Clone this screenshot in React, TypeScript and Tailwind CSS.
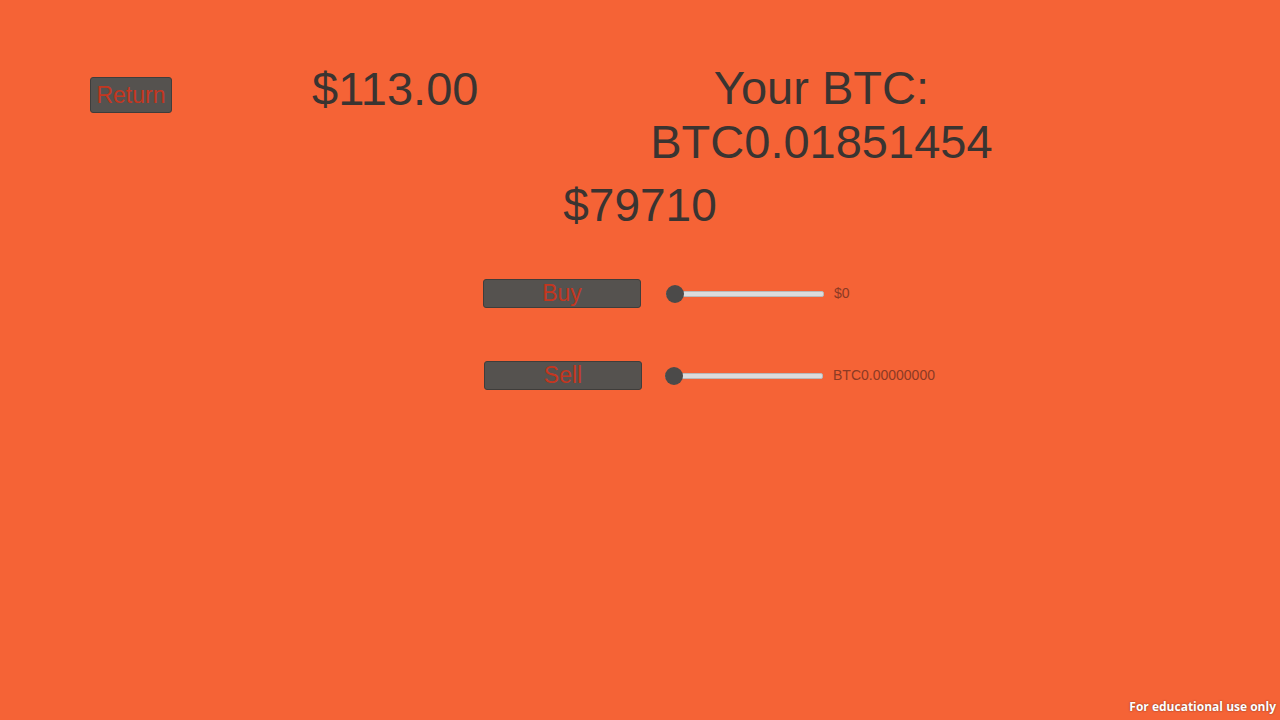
export default function App() {
  return (
    <div className="relative min-h-screen w-full bg-[#f56336] font-['Liberation_Sans',Arial,sans-serif] text-[#3a3431]">
      {/* Top row */}
      <div className="flex items-start">
        <button className="ml-[90px] mt-[77px] h-[36px] w-[82px] rounded-[3px] border border-[#3f3d3b] bg-[#55524f] text-[23px] leading-none text-[#c4361f]">
          Return
        </button>
        <div className="ml-[140px] mt-[62px] text-[47px] leading-[54px]">$113.00</div>
        <div className="ml-[143px] mt-[61px] w-[400px] text-center text-[47px] leading-[54px]">
          Your BTC:
          <br />
          BTC0.01851454
        </div>
      </div>

      <div className="mt-[9px] text-center text-[46px] leading-[54px]">$79710</div>

      {/* Buy */}
      <div className="ml-[483px] mt-[47px] flex items-center">
        <button className="h-[29px] w-[158px] rounded-[3px] border border-[#3f3d3b] bg-[#55524f] text-[23px] leading-none text-[#c4361f]">
          Buy
        </button>
        <Slider />
        <span className="ml-[10px] text-[14px] text-[#8c3a24]">$0</span>
      </div>

      {/* Sell */}
      <div className="ml-[484px] mt-[53px] flex items-center">
        <button className="h-[29px] w-[158px] rounded-[3px] border border-[#3f3d3b] bg-[#55524f] text-[23px] leading-none text-[#c4361f]">
          Sell
        </button>
        <Slider shift />
        <span className="ml-[10px] text-[14px] text-[#8c3a24]">BTC0.00000000</span>
      </div>

      <div className="absolute bottom-[4px] right-[4px] font-['Open_Sans',sans-serif] text-[12px] font-bold text-white [text-shadow:0_0_2px_rgba(0,0,0,0.5)]">
        For educational use only
      </div>
    </div>
  );
}

function Slider({ shift = false }: { shift?: boolean }) {
  return (
    <div
      className={`relative flex h-[18px] w-[158px] items-center ${shift ? "ml-[23px]" : "ml-[25px]"}`}
    >
      <div className="h-[6px] w-full rounded-[2px] border border-[#b9b9b9] bg-[#dcdcdc]" />
      <div className="absolute left-0 top-0 h-[18px] w-[18px] rounded-full bg-[#4b4a49]" />
    </div>
  );
}
